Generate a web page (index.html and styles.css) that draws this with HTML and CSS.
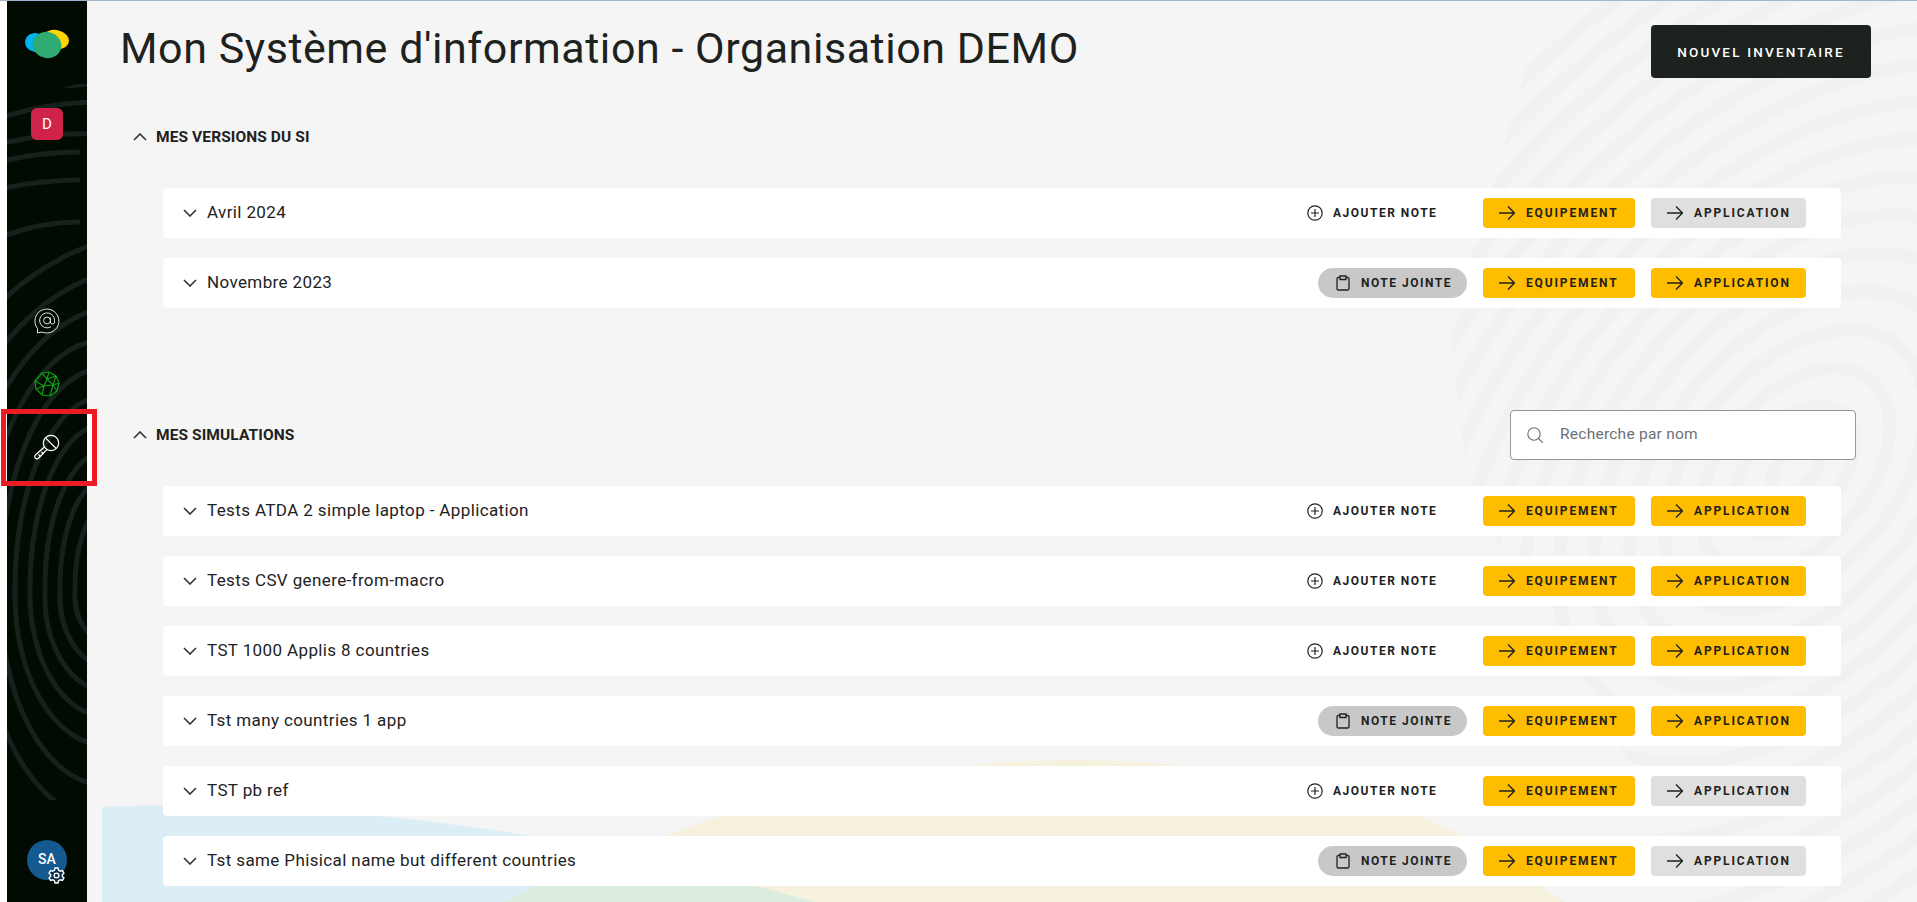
FILE: index.html
```html
<!DOCTYPE html>
<html lang="fr">
<head>
<meta charset="utf-8">
<title>Mon Système d'information</title>
<link rel="stylesheet" href="styles.css">
</head>
<body>
<svg class="defs" aria-hidden="true">
  <symbol id="arrow" viewBox="0 0 16 16"><path d="M0 8H15.5M9 1.5 15.5 8 9 14.5" fill="none" stroke="currentColor" stroke-width="1.4"/></symbol>
  <symbol id="down" viewBox="0 0 14 8"><path d="M1 1 7 7 13 1" fill="none" stroke="currentColor" stroke-width="1.6"/></symbol>
  <symbol id="up" viewBox="0 0 14 8"><path d="M1 7 7 1 13 7" fill="none" stroke="currentColor" stroke-width="1.6"/></symbol>
  <symbol id="plus" viewBox="0 0 16 16"><circle cx="8" cy="8" r="7.2" fill="none" stroke="currentColor" stroke-width="1.2"/><path d="M8 4V12M4 8H12" fill="none" stroke="currentColor" stroke-width="1.2"/></symbol>
  <symbol id="clip" viewBox="0 0 14 16"><path d="M3.5 2.5H2.2A1.2 1.2 0 0 0 1 3.7V13.8A1.2 1.2 0 0 0 2.2 15H11.8A1.2 1.2 0 0 0 13 13.8V3.7A1.2 1.2 0 0 0 11.8 2.5H10.5M4 1H10V4.5H4Z" fill="none" stroke="currentColor" stroke-width="1.3"/></symbol>
</svg>

<nav class="sidebar">
  <svg class="side-bg" viewBox="7 0 80 902" aria-hidden="true">
    <defs><clipPath id="sc"><path d="M7 108 75 84 87 84V800L7 800Z"/></clipPath></defs>
    <g clip-path="url(#sc)" fill="none" stroke="#17211c" stroke-width="5">
      <path d="M105 508A30 80 0 0 0 75 590 30 45 0 0 0 105 640"/>
      <path d="M105 480A45 108 0 0 0 60 590 45 70 0 0 0 105 665"/>
      <path d="M105 452A60 136 0 0 0 45 590 60 95 0 0 0 105 690"/>
      <path d="M105 424A75 164 0 0 0 30 590 75 122 0 0 0 105 716"/>
      <path d="M105 396A90 192 0 0 0 15 590 90 150 0 0 0 105 745"/>
      <path d="M105 368A105 220 0 0 0 0 590 105 190 0 0 0 105 785"/>
      <path d="M105 340A125 250 0 0 0 -20 590 125 225 0 0 0 105 820"/>
      <path d="M125 305A170 290 0 0 0 -45 590"/>
      <path d="M145 268A220 330 0 0 0 -75 590"/>
      <path d="M165 232A280 370 0 0 0 -115 590"/>
      <path d="M-200 590A280 370 0 0 1 80 222"/>
      <path d="M-300 590A380 410 0 0 1 80 180"/>
      <path d="M-300 590A380 438 0 0 1 80 152"/>
      <path d="M-300 590A380 468 0 0 1 92 134"/>
      <path d="M-300 590A400 510 0 0 1 100 102"/>
      <path d="M-300 590A400 530 0 0 1 100 84"/>
    </g>
  </svg>
  <svg class="logo" viewBox="0 0 44 30" aria-hidden="true">
    <ellipse cx="31" cy="10.5" rx="13" ry="9.5" fill="#ffd400" transform="rotate(12 31 10.5)"/>
    <ellipse cx="10.5" cy="13.5" rx="10.5" ry="9.5" fill="#00b4f0" transform="rotate(10 10.5 13.5)"/>
    <ellipse cx="22" cy="16" rx="14.5" ry="13" fill="#2fac72" transform="rotate(15 22 16)"/>
  </svg>
  <div class="org">D</div>
  <svg class="nav-ico first" viewBox="0 0 26 26" aria-hidden="true">
    <path d="M3.5 25V20.5A12 12 0 1 1 8 24Z" fill="none" stroke="#dfe3df" stroke-width="1"/>
    <circle cx="13" cy="12.5" r="3.4" fill="none" stroke="#dfe3df" stroke-width="1"/>
    <path d="M16.4 9.5V14A2 2 0 0 0 20.6 14V12.5A7.5 7.5 0 1 0 17 18.8" fill="none" stroke="#dfe3df" stroke-width="1"/>
  </svg>
  <svg class="nav-ico" viewBox="0 0 26 26" aria-hidden="true">
    <g fill="none" stroke="#0da012" stroke-width="1.2">
      <path d="M8 2 15 1 22 5 25 12 23 20 16 25 8 24 2 18 1 10Z"/>
      <path d="M8 2 13 8 22 5M13 8 10 15 2 18M13 8 19 14 25 12M10 15 19 14 16 25M10 15 8 24M19 14 23 20M1 10 10 15M15 1 13 8M19 14 22 5"/>
    </g>
  </svg>
  <svg class="nav-ico" viewBox="0 0 26 26" aria-hidden="true">
    <g fill="none" stroke="#ffffff" stroke-width="1.2">
      <circle cx="17" cy="9" r="7.7"/>
      <path d="M11.5 3.8 22.2 14.5"/>
      <path d="M11 12.5 1.4 21A2 2 0 0 0 4.4 24.2L13.4 15.2"/>
      <path d="M4.5 20.5 6.5 22.5M7.5 18 9.5 20"/>
    </g>
  </svg>
  <div class="avatar">SA
    <svg class="gear" viewBox="0 0 16 16" aria-hidden="true">
      <path d="M6.6 1H9.4L9.9 3 11.6 4 13.6 3.4 15 5.8 13.5 7.2V8.8L15 10.2 13.6 12.6 11.6 12 9.9 13 9.4 15H6.6L6.1 13 4.4 12 2.4 12.6 1 10.2 2.5 8.8V7.2L1 5.8 2.4 3.4 4.4 4 6.1 3Z" fill="#0b2f4d" stroke="#fff" stroke-width="1.3"/>
      <circle cx="8" cy="8" r="2.2" fill="none" stroke="#fff" stroke-width="1.3"/>
    </svg>
  </div>
</nav>

<main class="main">
  <svg class="main-bg" viewBox="87 0 1830 902" aria-hidden="true">
    <defs><clipPath id="fp"><path d="M1545 1 1450 330 1470 500 1560 640 1650 800 1665 902H1917V1Z"/></clipPath></defs>
    <g clip-path="url(#fp)">
      <g transform="rotate(-50 1795 470)" fill="none" stroke="#f1f1f1" stroke-width="13">
        <ellipse cx="1795" cy="470" rx="30" ry="18"/>
        <ellipse cx="1795" cy="470" rx="74" ry="46"/>
        <ellipse cx="1795" cy="470" rx="118" ry="74"/>
        <ellipse cx="1795" cy="470" rx="162" ry="102"/>
        <ellipse cx="1795" cy="470" rx="206" ry="130"/>
        <ellipse cx="1795" cy="470" rx="250" ry="158"/>
        <ellipse cx="1795" cy="470" rx="294" ry="186"/>
        <ellipse cx="1795" cy="470" rx="338" ry="214"/>
        <ellipse cx="1795" cy="470" rx="382" ry="242"/>
        <ellipse cx="1795" cy="470" rx="426" ry="270"/>
        <ellipse cx="1795" cy="470" rx="470" ry="298"/>
        <ellipse cx="1795" cy="470" rx="514" ry="326"/>
        <ellipse cx="1795" cy="470" rx="558" ry="354"/>
        <ellipse cx="1795" cy="470" rx="602" ry="382"/>
        <ellipse cx="1795" cy="470" rx="646" ry="410"/>
        <ellipse cx="1795" cy="470" rx="690" ry="438"/>
        <ellipse cx="1795" cy="470" rx="734" ry="466"/>
      </g>
    </g>
    <path d="M102 807C240 800 400 815 533 836 600 850 660 875 710 902H102Z" fill="#dbeef6"/>
    <path d="M663 836 720 816C800 785 950 760 1075 760 1200 760 1320 785 1419 816L1464 836 1565 902H815L757 886Z" fill="#f6f1dc"/>
    <path d="M536 886 502 902H815L757 886Z" fill="#dcecdf"/>
  </svg>

  <header class="topbar">
    <h1 class="title">Mon Système d'information - Organisation DEMO</h1>
    <button class="primary">NOUVEL INVENTAIRE</button>
  </header>

  <section class="section first-section">
    <div class="sec-head">
      <h2 class="sec-title"><svg class="chev-up"><use href="#up"/></svg>MES VERSIONS DU SI</h2>
    </div>
    <ul class="rows rows-a">
      <li class="row"><svg class="chev"><use href="#down"/></svg><span class="name">Avril 2024</span>
        <button class="add"><svg class="ico16"><use href="#plus"/></svg>AJOUTER NOTE</button>
        <button class="btn eq"><svg class="ico16"><use href="#arrow"/></svg>EQUIPEMENT</button>
        <button class="btn ap off"><svg class="ico16"><use href="#arrow"/></svg>APPLICATION</button></li>
      <li class="row"><svg class="chev"><use href="#down"/></svg><span class="name">Novembre 2023</span>
        <button class="joined"><svg class="ico-clip"><use href="#clip"/></svg>NOTE JOINTE</button>
        <button class="btn eq"><svg class="ico16"><use href="#arrow"/></svg>EQUIPEMENT</button>
        <button class="btn ap"><svg class="ico16"><use href="#arrow"/></svg>APPLICATION</button></li>
    </ul>
  </section>

  <section class="section second-section">
    <div class="sec-head">
      <h2 class="sec-title"><svg class="chev-up"><use href="#up"/></svg>MES SIMULATIONS</h2>
      <label class="search">
        <svg class="ico16 search-ico" viewBox="0 0 16 16"><circle cx="7" cy="7" r="6.2" fill="none" stroke="currentColor" stroke-width="1.1"/><path d="M11.5 11.5 16 16" stroke="currentColor" stroke-width="1.1"/></svg>
        <span class="placeholder">Recherche par nom</span>
      </label>
    </div>
    <ul class="rows rows-b">
      <li class="row"><svg class="chev"><use href="#down"/></svg><span class="name">Tests ATDA 2 simple laptop - Application</span>
        <button class="add"><svg class="ico16"><use href="#plus"/></svg>AJOUTER NOTE</button>
        <button class="btn eq"><svg class="ico16"><use href="#arrow"/></svg>EQUIPEMENT</button>
        <button class="btn ap"><svg class="ico16"><use href="#arrow"/></svg>APPLICATION</button></li>
      <li class="row"><svg class="chev"><use href="#down"/></svg><span class="name">Tests CSV genere-from-macro</span>
        <button class="add"><svg class="ico16"><use href="#plus"/></svg>AJOUTER NOTE</button>
        <button class="btn eq"><svg class="ico16"><use href="#arrow"/></svg>EQUIPEMENT</button>
        <button class="btn ap"><svg class="ico16"><use href="#arrow"/></svg>APPLICATION</button></li>
      <li class="row"><svg class="chev"><use href="#down"/></svg><span class="name">TST 1000 Applis 8 countries</span>
        <button class="add"><svg class="ico16"><use href="#plus"/></svg>AJOUTER NOTE</button>
        <button class="btn eq"><svg class="ico16"><use href="#arrow"/></svg>EQUIPEMENT</button>
        <button class="btn ap"><svg class="ico16"><use href="#arrow"/></svg>APPLICATION</button></li>
      <li class="row"><svg class="chev"><use href="#down"/></svg><span class="name">Tst many countries 1 app</span>
        <button class="joined"><svg class="ico-clip"><use href="#clip"/></svg>NOTE JOINTE</button>
        <button class="btn eq"><svg class="ico16"><use href="#arrow"/></svg>EQUIPEMENT</button>
        <button class="btn ap"><svg class="ico16"><use href="#arrow"/></svg>APPLICATION</button></li>
      <li class="row"><svg class="chev"><use href="#down"/></svg><span class="name">TST pb ref</span>
        <button class="add"><svg class="ico16"><use href="#plus"/></svg>AJOUTER NOTE</button>
        <button class="btn eq"><svg class="ico16"><use href="#arrow"/></svg>EQUIPEMENT</button>
        <button class="btn ap off"><svg class="ico16"><use href="#arrow"/></svg>APPLICATION</button></li>
      <li class="row"><svg class="chev"><use href="#down"/></svg><span class="name">Tst same Phisical name but different countries</span>
        <button class="joined"><svg class="ico-clip"><use href="#clip"/></svg>NOTE JOINTE</button>
        <button class="btn eq"><svg class="ico16"><use href="#arrow"/></svg>EQUIPEMENT</button>
        <button class="btn ap off"><svg class="ico16"><use href="#arrow"/></svg>APPLICATION</button></li>
    </ul>
  </section>
</main>

<div class="highlight"></div>
</body>
</html>
```

FILE: styles.css
```css
* { box-sizing: border-box; }
html, body { margin: 0; height: 902px; overflow: hidden; }
body {
  display: flex;
  padding-left: 7px;
  background: #fff;
  border-top: 1px solid #a3b3d3;
  font-family: Roboto, "Liberation Sans", sans-serif;
  color: #1e221e;
}
.defs { position: absolute; width: 0; height: 0; }

/* sidebar */
.sidebar {
  position: relative;
  flex: 0 0 80px;
  height: 901px;
  background: #020b02;
  display: flex;
  flex-direction: column;
  align-items: center;
  padding-top: 28px;
}
.side-bg { position: absolute; left: 0; top: -1px; width: 80px; height: 902px; }
.logo { position: relative; width: 44px; height: 30px; }
.org {
  position: relative;
  width: 32px;
  height: 32px;
  margin-top: 49px;
  border-radius: 6px;
  background: #d0234a;
  color: #fff;
  font-size: 15px;
  line-height: 32px;
  text-align: center;
}
.nav-ico { position: relative; width: 26px; height: 26px; margin-top: 37px; }
.nav-ico.first { margin-top: 168px; }
.avatar {
  position: relative;
  width: 40px;
  height: 40px;
  margin-top: auto;
  margin-bottom: 22px;
  border-radius: 50%;
  background: #14598f;
  color: #fff;
  font-size: 14px;
  font-weight: 500;
  line-height: 38px;
  text-align: center;
}
.gear { position: absolute; left: 21px; top: 27px; width: 17px; height: 17px; }

/* main */
.main {
  position: relative;
  flex: 1;
  height: 901px;
  background: #f5f5f5;
  overflow: hidden;
}
.main-bg { position: absolute; left: 0; top: -1px; width: 1830px; height: 902px; }
.topbar {
  position: relative;
  display: flex;
  align-items: flex-start;
  justify-content: space-between;
  padding: 24px 46px 0 33px;
  height: 77px;
}
.title {
  margin: 0;
  font-size: 43px;
  font-weight: 400;
  line-height: 46px;
  letter-spacing: 0.55px;
}
.primary {
  width: 220px;
  height: 53px;
  border: 0;
  border-radius: 4px;
  background: #1e221e;
  color: #fff;
  font: 500 13.5px Roboto, sans-serif;
  letter-spacing: 2.2px;
}
.section { position: relative; }
.first-section { margin-top: 34px; }
.second-section { margin-top: 102px; }
.sec-head {
  display: flex;
  align-items: center;
  justify-content: space-between;
  height: 50px;
  padding: 0 61px 0 46px;
}
.sec-title {
  display: flex;
  align-items: center;
  margin: 0;
  font-size: 15.5px;
  font-weight: 700;
  letter-spacing: 0.1px;
  line-height: 20px;
}
.chev-up { width: 14px; height: 8px; margin-right: 9px; color: #333; }
.search {
  display: flex;
  align-items: center;
  width: 346px;
  height: 50px;
  padding-left: 16px;
  background: #fff;
  border: 1px solid #969696;
  border-radius: 4px;
  color: #6a7078;
}
.search-ico { margin-right: 17px; }
.placeholder { font-size: 15.5px; letter-spacing: 0.25px; padding-bottom: 2px; }
.rows { list-style: none; margin: 0; padding: 0 76px; display: flex; flex-direction: column; gap: 20px; }
.rows-a { margin-top: 26px; }
.rows-b { margin-top: 26px; }
.row {
  display: flex;
  align-items: center;
  height: 50px;
  padding: 0 35px 0 20px;
  background: #fff;
  border-radius: 4px;
}
.chev { width: 14px; height: 8px; margin-right: 10px; color: #333; }
.name { flex: 1; font-size: 17px; letter-spacing: 0.38px; padding-bottom: 2px; }
button { cursor: pointer; }
.ico16 { width: 16px; height: 16px; flex: none; }
.ico-clip { width: 14px; height: 16px; flex: none; }
.add, .joined, .btn {
  display: flex;
  align-items: center;
  height: 30px;
  border: 0;
  font: 700 12px Roboto, sans-serif;
  color: #1e221e;
  letter-spacing: 1.5px;
  white-space: nowrap;
}
.add {
  width: 160px;
  padding: 0;
  gap: 10px;
  background: none;
}
.joined {
  width: 149px;
  padding: 0 0 0 18px;
  gap: 11px;
  background: #c8c8c8;
  border-radius: 15px;
}
.btn {
  margin-left: 16px;
  padding-left: 16px;
  gap: 11px;
  background: #ffbd00;
  border-radius: 4px;
  letter-spacing: 1.85px;
}
.eq { width: 152px; }
.ap { width: 155px; }
.off { background: #dfdfdf; }

/* screenshot annotation */
.highlight {
  position: absolute;
  left: 1px;
  top: 409px;
  width: 96px;
  height: 77px;
  border: 5px solid #ec1c24;
  background: linear-gradient(to right, transparent 81px, #fff 81px);
}
```
